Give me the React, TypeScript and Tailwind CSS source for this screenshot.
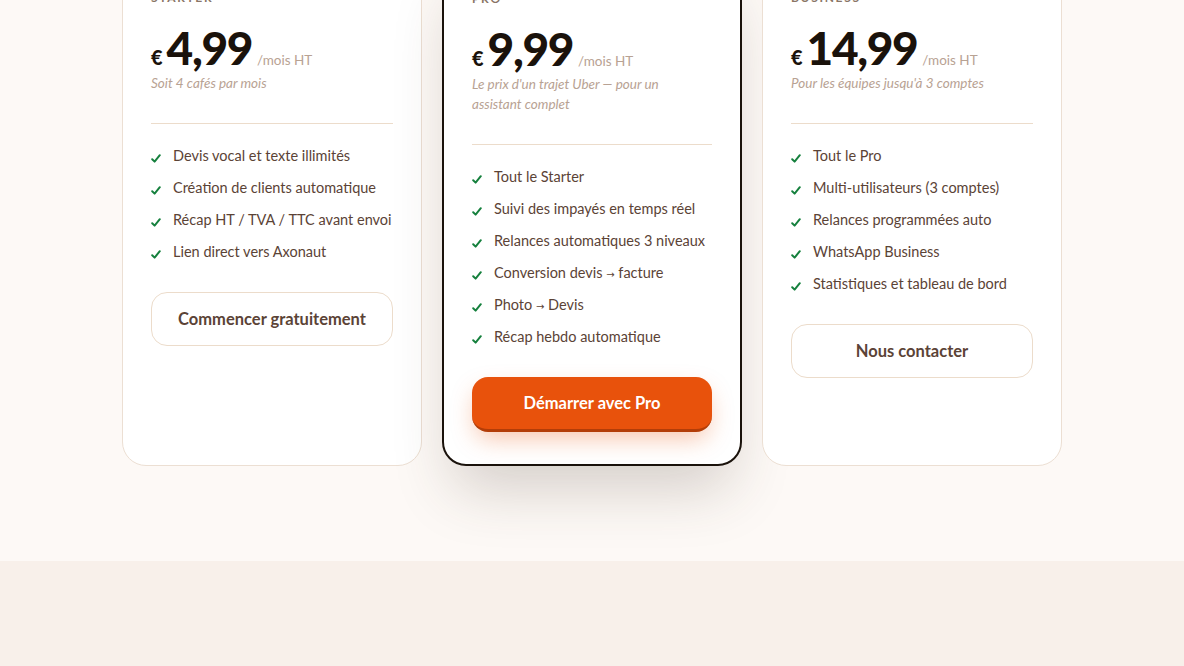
import React from 'react'

type Plan = {
  name: string
  price: string
  note: string
  features: string[]
  cta: string
  featured?: boolean
}

const plans: Plan[] = [
  {
    name: 'Starter',
    price: '4,99',
    note: 'Soit 4 cafés par mois',
    features: [
      'Devis vocal et texte illimités',
      'Création de clients automatique',
      'Récap HT / TVA / TTC avant envoi',
      'Lien direct vers Axonaut',
    ],
    cta: 'Commencer gratuitement',
  },
  {
    name: 'Pro',
    price: '9,99',
    note: "Le prix d'un trajet Uber — pour un assistant complet",
    features: [
      'Tout le Starter',
      'Suivi des impayés en temps réel',
      'Relances automatiques 3 niveaux',
      'Conversion devis → facture',
      'Photo → Devis',
      'Récap hebdo automatique',
    ],
    cta: 'Démarrer avec Pro',
    featured: true,
  },
  {
    name: 'Business',
    price: '14,99',
    note: "Pour les équipes jusqu'à 3 comptes",
    features: [
      'Tout le Pro',
      'Multi-utilisateurs (3 comptes)',
      'Relances programmées auto',
      'WhatsApp Business',
      'Statistiques et tableau de bord',
    ],
    cta: 'Nous contacter',
  },
]

// small thin arrows like the original font
function withArrows(text: string) {
  const parts = text.split('→')
  return parts.map((p, i) => (
    <React.Fragment key={i}>
      {p}
      {i < parts.length - 1 && (
        <span className="inline-block font-['DejaVu_Sans',sans-serif] text-[10px] leading-none">→</span>
      )}
    </React.Fragment>
  ))
}

function Check() {
  return (
    <svg width="10" height="9" viewBox="0 0 10 9" className="mt-[4px] mr-[12px] shrink-0">
      <path d="M1.2 5.2 L3.6 7.6 L8.8 1.2" fill="none" stroke="#15803d" strokeWidth="2" strokeLinecap="round" strokeLinejoin="round" />
    </svg>
  )
}

function PlanCard({ plan }: { plan: Plan }) {
  return (
    <div
      className={`flex flex-col rounded-3xl bg-white px-7 pt-8 pb-8 ${
        plan.featured
          ? 'border-2 border-[#1a120b] shadow-[0_34px_60px_-12px_rgba(70,55,40,0.22)]'
          : 'border border-[#ecdfd3]'
      }`}
    >
      <div className="text-xs font-bold uppercase leading-4 tracking-[0.14em] text-[#8a7566]">{plan.name}</div>

      <div className="mt-[19px] flex items-baseline">
        <span className="mr-[4px] text-[20px] font-black leading-none text-[#1a120b]">€</span>
        <span className="text-[46px] font-black leading-none tracking-[-0.03em] text-[#1a120b]">{plan.price}</span>
        <span className="ml-[5px] text-[13.5px] leading-none text-[#b8a293]">/mois HT</span>
      </div>

      <p className="mt-[2px] max-w-[220px] text-[13.5px] italic leading-5 text-[#b8a293]">{plan.note}</p>

      <div className="mt-[30px] border-t border-[#ecdccb]" />

      <ul className="mt-[22px] space-y-3">
        {plan.features.map((f) => (
          <li key={f} className="flex h-5 items-center text-[14.5px] leading-5 text-[#5b4336]">
            <Check />
            <span>{withArrows(f)}</span>
          </li>
        ))}
      </ul>

      {plan.featured ? (
        <button className="mt-[30px] h-[55px] w-full rounded-2xl border-b-[3px] border-[#b33d08] bg-[#e8520c] text-[16.5px] font-bold text-white shadow-[0_10px_24px_-4px_rgba(232,82,12,0.35)]">
          {plan.cta}
        </button>
      ) : (
        <button className="mt-[30px] h-[54px] w-full rounded-2xl border border-[#ecdccb] bg-white text-[16.5px] font-bold text-[#5b4336]">
          {plan.cta}
        </button>
      )}
    </div>
  )
}

export default function App() {
  return (
    <div className="h-[666px] overflow-hidden bg-[#f8f0ea] font-['Lato',sans-serif]">
      <section className="bg-[#fdf9f6] pb-[95px]">
        <div className="mx-auto -mt-[43px] grid w-[940px] grid-cols-3 gap-5">
          {plans.map((p) => (
            <PlanCard key={p.name} plan={p} />
          ))}
        </div>
      </section>
    </div>
  )
}
